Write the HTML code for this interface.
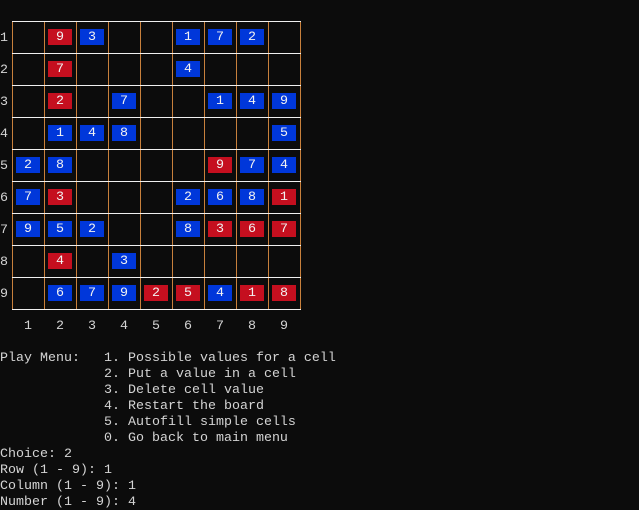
<!DOCTYPE html>
<html><head><meta charset="utf-8"><style>
html,body{margin:0;padding:0;background:#0c0c0c;width:639px;height:510px;overflow:hidden;position:relative}
*{font-family:"Liberation Mono","DejaVu Sans Mono",monospace;font-size:13.33px;color:#d4d4d4}
.a{position:absolute;line-height:16px;white-space:pre}
.h{position:absolute;left:12px;width:289px;height:1px;background:#f0f0f0;z-index:2}
.v{position:absolute;top:21px;width:1px;height:289px;background:#c8803c}
.b{position:absolute;width:24px;height:16px;line-height:18px;text-align:center;color:#f2f2f2}
.r{background:#c50f1f}.u{background:#0037da}
</style></head><body>
<div id="g"></div>
<pre class="a" style="left:0;top:351px;margin:0">Play Menu:   1. Possible values for a cell
             2. Put a value in a cell
             3. Delete cell value
             4. Restart the board
             5. Autofill simple cells
             0. Go back to main menu
Choice: 2
Row (1 - 9): 1
Column (1 - 9): 1
Number (1 - 9): 4</pre>
<script>
var d=["_ 9r 3b _ _ 1b 7b 2b _","_ 7r _ _ _ 4b _ _ _","_ 2r _ 7b _ _ 1b 4b 9b","_ 1b 4b 8b _ _ _ _ 5b","2b 8b _ _ _ _ 9r 7b 4b","7b 3r _ _ _ 2b 6b 8b 1r","9b 5b 2b _ _ 8b 3r 6r 7r","_ 4r _ 3b _ _ _ _ _","_ 6b 7b 9b 2r 5r 4b 1r 8r"];
var h="";
for(var i=0;i<10;i++){h+='<div class="h" style="top:'+(21+32*i)+'px"></div><div class="v" style="left:'+(12+32*i)+'px"></div>';}
for(var r=0;r<9;r++){
 h+='<div class="a" style="left:0;top:'+(31+32*r)+'px">'+(r+1)+'</div>';
 h+='<div class="a" style="left:'+(24+32*r)+'px;top:319px">'+(r+1)+'</div>';
 var c=d[r].split(" ");
 for(var k=0;k<9;k++){if(c[k]!="_"){h+='<div class="b '+(c[k][1]=="r"?"r":"u")+'" style="left:'+(16+32*k)+'px;top:'+(29+32*r)+'px">'+c[k][0]+'</div>';}}
}
document.getElementById("g").innerHTML=h;
</script>
</body></html>
